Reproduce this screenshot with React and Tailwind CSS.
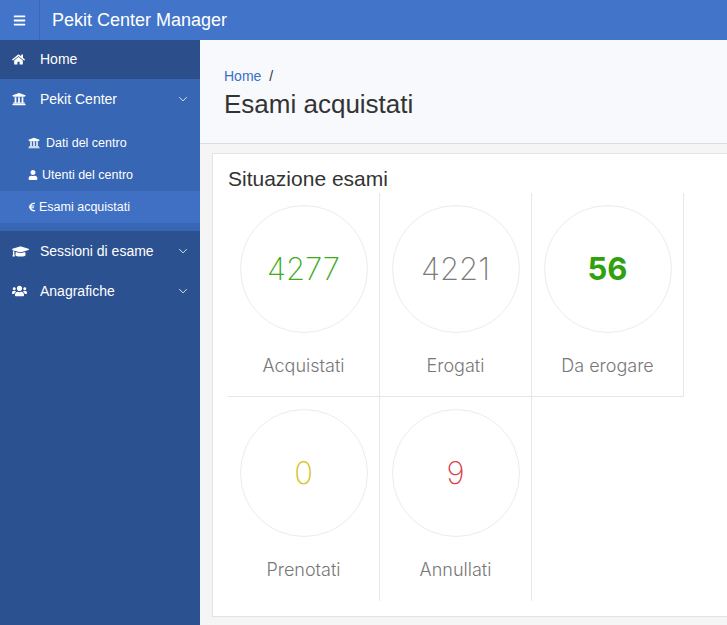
import { FaBars, FaHome, FaUniversity, FaUser, FaEuroSign, FaGraduationCap, FaUsers } from "react-icons/fa";

const Chevron = () => (
  <svg viewBox="0 0 12 8" className="w-[10px] h-[6px]" fill="none" stroke="currentColor" strokeWidth="1.1">
    <path d="M1 1.5l5 5 5-5" />
  </svg>
);

const stats = [
  { value: "4277", label: "Acquistati", cls: "text-[#3fab20] font-extralight" },
  { value: "4221", label: "Erogati", cls: "text-[#7a7a7a] font-extralight" },
  { value: "56", label: "Da erogare", cls: "text-[#2fa10f] font-bold" },
  { value: "0", label: "Prenotati", cls: "text-[#d4c41e] font-extralight" },
  { value: "9", label: "Annullati", cls: "text-[#d9434f] font-extralight" },
];

const StatCell = ({ value, label, cls, bottom }) => (
  <div className={`w-[152px] h-[204px] border-r border-[#e6e6e6] flex flex-col items-center pt-3 ${bottom ? "border-b" : ""}`}>
    <div className="w-[128px] h-[128px] rounded-full border border-[#ececec] flex items-center justify-center">
      <span className={`text-[31px] ${cls}`} style={{ fontFamily: "Inter, 'Open Sans', sans-serif" }}>
        {value}
      </span>
    </div>
    <div className="mt-[19px] text-[18px] font-light text-[#777]" style={{ fontFamily: "Inter, 'Open Sans', sans-serif" }}>
      {label}
    </div>
  </div>
);

export default function App() {
  return (
    <div className="w-[727px] h-[625px] overflow-hidden flex flex-col bg-[#f5f5f5]" style={{ fontFamily: "'Liberation Sans', Arial, sans-serif" }}>
      {/* Top bar */}
      <div className="h-10 bg-[#4275c9] flex items-center text-white shrink-0">
        <div className="w-10 h-10 flex items-center justify-center border-r border-[#3a68b6]">
          <FaBars className="w-[13px] h-[13px]" />
        </div>
        <div className="pl-3 text-[18px]">Pekit Center Manager</div>
      </div>

      <div className="flex flex-1 min-h-0">
        {/* Sidebar */}
        <div className="w-[200px] bg-[#2c5190] text-white text-[14px] shrink-0">
          <div className="h-[39px] bg-[#2c4e8a] flex items-center pl-3">
            <FaHome className="w-[13px] h-[13px]" />
            <span className="ml-[15px]">Home</span>
          </div>
          <div className="bg-[#3766b4] pb-2">
            <div className="h-10 flex items-center pl-3 pr-3">
              <FaUniversity className="w-[14px] h-[14px]" />
              <span className="ml-[14px] flex-1">Pekit Center</span>
              <Chevron />
            </div>
            <div className="pt-2 text-[12.5px]">
              <div className="h-8 flex items-center pl-7">
                <FaUniversity className="w-[12px] h-[12px]" />
                <span className="ml-[6px]">Dati del centro</span>
              </div>
              <div className="h-8 flex items-center pl-7">
                <FaUser className="w-[10px] h-[10px]" />
                <span className="ml-1">Utenti del centro</span>
              </div>
              <div className="h-8 flex items-center pl-7 bg-[#3f70c3]">
                <FaEuroSign className="w-[8px] h-[10px]" />
                <span className="ml-[3px]">Esami acquistati</span>
              </div>
            </div>
          </div>
          <div className="h-10 flex items-center pl-3 pr-3">
            <FaGraduationCap className="w-[17px] h-[15px]" />
            <span className="ml-[11px] flex-1">Sessioni di esame</span>
            <Chevron />
          </div>
          <div className="h-10 flex items-center pl-3 pr-3">
            <FaUsers className="w-[15px] h-[14px]" />
            <span className="ml-[13px] flex-1">Anagrafiche</span>
            <Chevron />
          </div>
        </div>

        {/* Main */}
        <div className="flex-1 min-w-0 overflow-hidden">
          <div className="h-[104px] bg-[#f8f9fc] border-b border-[#dcdde2] pl-6 pt-[26px]">
            <div className="text-[14px] text-[#333]">
              <span className="text-[#3a6fc4]">Home</span>
              <span className="ml-2">/</span>
            </div>
            <div className="text-[26px] leading-[34px] text-[#333]">Esami acquistati</div>
          </div>
          <div className="pl-3 pt-[9px]">
            <div className="w-[560px] h-[464px] bg-white border border-[#e3e3e3] pl-[15px] pt-[11px]">
              <div className="text-[21px] leading-[28px] text-[#333] h-7">Situazione esami</div>
              <div className="flex">
                {stats.slice(0, 3).map((s) => (
                  <StatCell key={s.label} {...s} bottom />
                ))}
              </div>
              <div className="flex">
                {stats.slice(3).map((s) => (
                  <StatCell key={s.label} {...s} />
                ))}
              </div>
            </div>
          </div>
        </div>
      </div>
    </div>
  );
}
